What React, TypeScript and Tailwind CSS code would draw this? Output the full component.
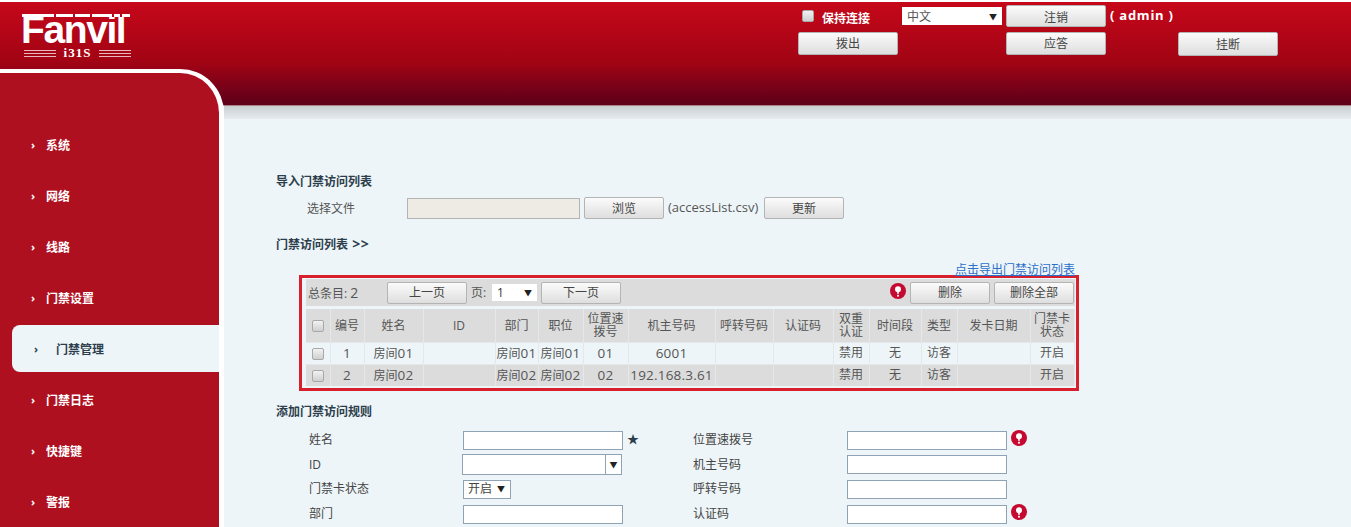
import type { ReactNode } from 'react';

const font = { fontFamily: '"Open Sans", "Noto Sans CJK SC", sans-serif' };

const menu = ['系统', '网络', '线路', '门禁设置', '门禁管理', '门禁日志', '快捷键', '警报'];

const logoBars = ['w-[32px]', 'w-[17px]', 'w-[15px]', 'w-[20px]', 'w-[6px]', 'w-[8px]'];

const columns = [
  { label: '', width: 'w-[24px]' },
  { label: '编号', width: 'w-[34px]' },
  { label: '姓名', width: 'w-[59px]' },
  { label: 'ID', width: 'w-[72px]' },
  { label: '部门', width: 'w-[43px]' },
  { label: '职位', width: 'w-[45px]' },
  { label: '位置速拨号', width: 'w-[45px]' },
  { label: '机主号码', width: 'w-[87px]' },
  { label: '呼转号码', width: 'w-[58px]' },
  { label: '认证码', width: 'w-[60px]' },
  { label: '双重认证', width: 'w-[36px]' },
  { label: '时间段', width: 'w-[52px]' },
  { label: '类型', width: 'w-[36px]' },
  { label: '发卡日期', width: 'w-[73px]' },
  { label: '门禁卡状态', width: 'w-[44px]' },
];

const rows = [
  ['1', '房间01', '', '房间01', '房间01', '01', '6001', '', '', '禁用', '无', '访客', '', '开启'],
  ['2', '房间02', '', '房间02', '房间02', '02', '192.168.3.61', '', '', '禁用', '无', '访客', '', '开启'],
];

function Btn({ children, className = 'w-[80px] h-[22px]' }: { children: ReactNode; className?: string }) {
  return (
    <button className={`${className} shrink-0 flex items-center justify-center pt-[1px] border border-[#b4b4b4] rounded-[2px] bg-gradient-to-b from-[#fbfbfb] to-[#dedede] text-[12px] text-[#444]`}>
      {children}
    </button>
  );
}

function Alert({ className = '' }: { className?: string }) {
  return (
    <svg viewBox="0 0 16 16" className={`w-[16px] h-[16px] shrink-0 ${className}`}>
      <circle cx="8" cy="8" r="8" fill="#c50a32" />
      <circle cx="8" cy="6.2" r="3" fill="#fff" />
      <path d="M7 8h2l-.4 3H7.4z" fill="#fff" />
      <rect x="7.1" y="11.8" width="1.8" height="1.8" fill="#fff" />
    </svg>
  );
}

function Checkbox({ className = '' }: { className?: string }) {
  return <span className={`inline-block w-[12px] h-[12px] rounded-[2px] border border-[#a8a8a8] bg-gradient-to-b from-[#f2f2f2] to-[#cfcfcf] ${className}`} />;
}

function Arrow() {
  return <span className="text-[8px] leading-none text-[#222]">▼</span>;
}

function Field({ label, children }: { label: string; children: ReactNode }) {
  return (
    <div className="flex items-center h-[24.6px]">
      <span className="w-[154px] shrink-0 text-[12px] text-[#444]">{label}</span>
      {children}
    </div>
  );
}

function TextInput() {
  return <input className="w-[160px] h-[19px] border border-[#8fa3b5] bg-white outline-none" />;
}

function LogoLines() {
  return (
    <div className="flex-1 h-[7px] border-y border-[#e8b8bc] flex items-center">
      <div className="w-full h-px bg-[#e8b8bc]" />
    </div>
  );
}

// digits in the table run wider than the CJK next to them
function CellText({ value }: { value: string }) {
  return (
    <>
      {value.split(/([0-9.]+)/).map((part, i) =>
        /[0-9]/.test(part) ? (
          <span key={i} className="text-[13.5px] tracking-[0.2px]">{part}</span>
        ) : (
          part
        )
      )}
    </>
  );
}

export default function App() {
  return (
    <div className="w-[1351px] h-[527px] overflow-hidden bg-[#eef5f8]" style={font}>
      <header className="h-[106px] border-t-2 border-white border-b border-b-[#b08088] bg-gradient-to-b from-[#c6081a] via-[#a00414] via-60% to-[#5c0018] flex">
        <div className="w-[798px] shrink-0 pl-[21px] pt-[12px]">
          <div className="relative w-[110px] h-[30px]">
            <div className="text-white font-bold text-[39px] leading-[30px] tracking-[-1.4px] pt-[1px]" style={{ fontFamily: '"Liberation Sans", sans-serif' }}>
              Fanvil
            </div>
            <div className="absolute left-[1px] top-0 bg-[#b8061a] flex gap-[2px]">
              {logoBars.map((w, i) => (
                <div key={i} className={`${w} h-[3px] bg-white`} />
              ))}
            </div>
          </div>
          <div className="w-[107px] ml-[3px] flex items-center gap-[8px] mt-[2px]">
            <LogoLines />
            <span className="text-white font-bold text-[13px] leading-[14px] tracking-[1px]" style={{ fontFamily: '"Liberation Serif", serif' }}>i31S</span>
            <LogoLines />
          </div>
        </div>
        <div className="grid grid-cols-[100px_108px_100px_72px_100px] grid-rows-[22px_24px] gap-y-[5px] pt-[3px] h-fit">
          <div className="flex items-start pl-[4px] pt-[5px]">
            <Checkbox className="mr-[8px]" />
            <span className="text-white font-bold text-[12px] leading-[16px] pt-[1px]">保持连接</span>
          </div>
          <div className="pl-[4px] pt-[2px]">
            <div className="w-[100px] h-[18px] bg-white flex items-center justify-between pt-[1px] pl-[5px] pr-[5px] text-[12px] text-[#555]">
              中文 <Arrow />
            </div>
          </div>
          <Btn className="w-[100px] h-[22px] pt-[3px]">注销</Btn>
          <span className="pl-[4px] text-white font-bold text-[13px] leading-[20px] tracking-[0.75px]">( admin )</span>
          <div />
          <Btn className="w-[100px] h-[23px]">拨出</Btn>
          <div />
          <Btn className="w-[100px] h-[23px]">应答</Btn>
          <div />
          <Btn className="w-[100px] h-[24px]">挂断</Btn>
        </div>
      </header>

      <div className="flex">
        <nav className="w-[224px] h-[458px] -mt-[37px] shrink-0 border-t-4 border-r-[5px] border-white rounded-tr-[44px] bg-[#ae1020] pt-[46px] overflow-hidden">
          {menu.map((item) =>
            item === '门禁管理' ? (
              <div key={item} className="h-[51px] flex items-center">
                <div className="ml-[12px] w-full h-[47px] rounded-l-[8px] bg-[#eef5f8] flex items-center pl-[22px] text-[#2c3e4c]">
                  <span className="w-[22px] text-[11px] font-bold leading-none">›</span>
                  <span className="text-[12px] font-bold pt-[2px]">{item}</span>
                </div>
              </div>
            ) : (
              <div key={item} className="h-[51px] flex items-center pl-[31px] text-white">
                <span className="w-[15px] text-[11px] font-bold leading-none">›</span>
                <span className="text-[12px] font-bold pt-[2px]">{item}</span>
              </div>
            )
          )}
        </nav>

        <main className="flex-1 min-w-0">
          <div className="h-[13px] bg-gradient-to-b from-[#c9ced1] to-[#e6ecef]" />
          <div className="pl-[52px] pt-[53px]">
            <h3 className="h-[18px] text-[12px] leading-[20px] font-bold text-[#2c3e4c]">导入门禁访问列表</h3>
            <div className="flex items-center mt-[7px] h-[22px] text-[12px] text-[#555]">
              <span className="w-[131px] pl-[31px] pt-[1px] shrink-0">选择文件</span>
              <input className="w-[173px] h-[21px] border border-[#b4b4b4] bg-[#eeebe4] outline-none" />
              <Btn className="ml-[4px] w-[80px] h-[22px]">浏览</Btn>
              <span className="ml-[4px] w-[96px] shrink-0 text-[13px]">(accessList.csv)</span>
              <Btn>更新</Btn>
            </div>
            <h3 className="mt-[15px] h-[18px] text-[12px] leading-[20px] font-bold text-[#2c3e4c]">门禁访问列表 <span className="text-[14px] tracking-[0.5px] ml-[1px]">&gt;&gt;</span></h3>

            <div className="w-[799px] text-right mt-[9px] h-[14px] leading-[14px]">
              <a className="text-[12px] text-[#2a6fc9] underline">点击导出门禁访问列表</a>
            </div>

            <section className="ml-[23px] w-[780px] h-[116px] border-[3px] border-[#d7202c] pt-[1px] pl-[4px]">
              <div className="w-[769px] h-[27px] bg-[#dcdcdc] flex items-center pl-[2px] pr-[1px] text-[12px] text-[#555]">
                <span className="w-[79px] shrink-0">总条目: <span className="text-[14px]">2</span></span>
                <Btn>上一页</Btn>
                <span className="ml-[4px] w-[21px] shrink-0">页:</span>
                <div className="w-[45px] h-[17px] bg-white flex items-center justify-between pl-[5px] pr-[5px] text-[#333]">
                  1 <Arrow />
                </div>
                <Btn className="ml-[4px] w-[80px] h-[22px]">下一页</Btn>
                <Alert className="ml-auto mr-[4px] -mt-[4px]" />
                <Btn>删除</Btn>
                <Btn className="ml-[4px] w-[80px] h-[22px]">删除全部</Btn>
              </div>
              <table className="mt-[3px] w-[768px] table-fixed border-collapse text-[12px] text-[#555]">
                <colgroup>
                  {columns.map((c, i) => (
                    <col key={i} className={c.width} />
                  ))}
                </colgroup>
                <thead>
                  <tr className="h-[33px] bg-[#dcdcdc]">
                    {columns.map((c, i) => (
                      <th key={i} className="font-normal leading-[13px] p-0 border-r border-[#e4e8ea] text-center">
                        {i === 0 ? <Checkbox className="align-middle" /> : c.label}
                      </th>
                    ))}
                  </tr>
                </thead>
                <tbody>
                  {rows.map((r, i) => (
                    <tr key={r[0]} className={`h-[22px] border-t border-[#e4e8ea] ${i === 0 ? 'bg-[#eef5f8]' : 'bg-[#dcdcdc]'}`}>
                      <td className="p-0 text-center border-r border-[#e4e8ea]"><Checkbox className="align-middle" /></td>
                      {r.map((v, j) => (
                        <td key={j} className="p-0 text-center whitespace-nowrap border-r border-[#e4e8ea]"><CellText value={v} /></td>
                      ))}
                    </tr>
                  ))}
                </tbody>
              </table>
            </section>

            <h3 className="mt-[11px] h-[18px] text-[12px] leading-[20px] font-bold text-[#2c3e4c]">添加门禁访问规则</h3>
            <div className="grid grid-cols-[384px_auto] pl-[33px] mt-[8px]">
              <div>
                <Field label="姓名">
                  <TextInput />
                  <span className="ml-[4px] text-[12px] text-[#2c3e4c]">★</span>
                </Field>
                <Field label="ID">
                  <div className="-ml-px w-[160px] h-[21px] border border-[#8fa3b5] bg-white flex justify-end">
                    <span className="w-[16px] border-l border-[#8fa3b5] flex items-center justify-center"><Arrow /></span>
                  </div>
                </Field>
                <Field label="门禁卡状态">
                  <div className="w-[48px] h-[19px] border border-[#8fa3b5] bg-white flex items-center pl-[4px] gap-[5px] text-[12px] text-[#444]">
                    开启 <Arrow />
                  </div>
                </Field>
                <Field label="部门">
                  <TextInput />
                </Field>
              </div>
              <div>
                <Field label="位置速拨号">
                  <TextInput />
                  <Alert className="ml-[4px] -mt-[4px]" />
                </Field>
                <Field label="机主号码">
                  <TextInput />
                </Field>
                <Field label="呼转号码">
                  <TextInput />
                </Field>
                <Field label="认证码">
                  <TextInput />
                  <Alert className="ml-[4px] -mt-[4px]" />
                </Field>
              </div>
            </div>
          </div>
        </main>
      </div>
    </div>
  );
}
